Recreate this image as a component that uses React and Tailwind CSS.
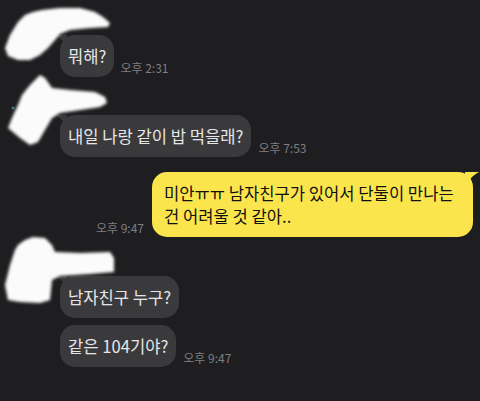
const font = "font-['Noto_Sans_CJK_KR','Noto_Sans',sans-serif]";

function Time({ children, className = '' }) {
  return (
    <span className={`text-[12px] leading-none text-[#7f7f82] whitespace-nowrap pb-[3px] ${className}`}>{children}</span>
  );
}

function GrayBubble({ children, tail }) {
  return (
    <div className="relative rounded-[15px] bg-[#3a3a3c] px-[8px] py-[10px] text-[16.6px] leading-[22px] text-[#e6e6e8] whitespace-nowrap">
      {tail && (
        <svg className="absolute left-[-5px] top-0" width="12" height="12" viewBox="0 0 12 12">
          <path d="M0 0 L12 0 L12 12 Q8 4 0 0 Z" fill="#3a3a3c" />
        </svg>
      )}
      {children}
    </div>
  );
}

function Blobs() {
  return (
    <svg className="absolute inset-0" width="480" height="401" viewBox="0 0 480 401">
      <defs>
        <filter id="soft" x="-10%" y="-10%" width="120%" height="120%">
          <feGaussianBlur stdDeviation="1.4" />
        </filter>
      </defs>
      <g fill="#fbfbfb" filter="url(#soft)">
        <path d="M5 48 L10 35 L18 22 L25 15 L33 12 L42 10 L60 8 L80 8 L95 12 L103 17 L110 23 L108 27 L90 28 L70 30 L60 34 L55 40 L48 48 L40 55 L30 60 L18 60 L8 56 Z" />
        <path d="M40 75 L45 78 L52 88 L70 90 L95 92 L105 97 L107 103 L100 107 L80 110 L60 113 L52 118 L45 130 L38 142 L30 145 L20 138 L8 128 L12 118 L18 105 L22 95 L30 85 Z" />
        <path d="M18 245 L25 240 L33 237 L45 238 L52 245 L55 252 L80 253 L110 252 L114 258 L114 272 L90 274 L60 276 L52 280 L50 300 L40 303 L20 302 L8 300 L5 285 L10 265 L15 250 Z" />
      </g>
      <circle cx="13" cy="108" r="1.6" fill="#4fb3c0" opacity="0.6" />
    </svg>
  );
}

export default function App() {
  return (
    <div className={`relative w-[480px] h-[401px] overflow-hidden bg-[#1e1e20] ${font}`}>
      <div className="flex flex-col pl-[60px] pr-[7px]">
        <div className="mt-[35px] flex items-end gap-[6px]">
          <GrayBubble tail>뭐해?</GrayBubble>
          <Time>오후 2:31</Time>
        </div>

        <div className="mt-[38px] flex items-end gap-[7px]">
          <GrayBubble tail>내일 나랑 같이 밥 먹을래?</GrayBubble>
          <Time>오후 7:53</Time>
        </div>

        <div className="mt-[15px] flex items-end justify-end gap-[8px]">
          <Time>오후 9:47</Time>
          <div className="relative w-[321px] rounded-[15px] bg-[#fbe54d] pl-[12px] pr-[6px] py-[10px] text-[16.6px] leading-[22.5px] text-[#111] whitespace-nowrap">
            <svg className="absolute right-[-6px] top-0" width="14" height="12" viewBox="0 0 14 12">
              <path d="M0 0 L14 0 Q6 4 2 12 L0 12 Z" fill="#fbe54d" />
            </svg>
            미안ㅠㅠ 남자친구가 있어서 단둘이 만나는<br />건 어려울 것 같아..
          </div>
        </div>

        <div className="mt-[39px] flex items-end">
          <GrayBubble tail>남자친구 누구?</GrayBubble>
        </div>

        <div className="mt-[7px] flex items-end gap-[7px]">
          <GrayBubble>같은 104기야?</GrayBubble>
          <Time>오후 9:47</Time>
        </div>
      </div>
      <Blobs />
    </div>
  );
}
